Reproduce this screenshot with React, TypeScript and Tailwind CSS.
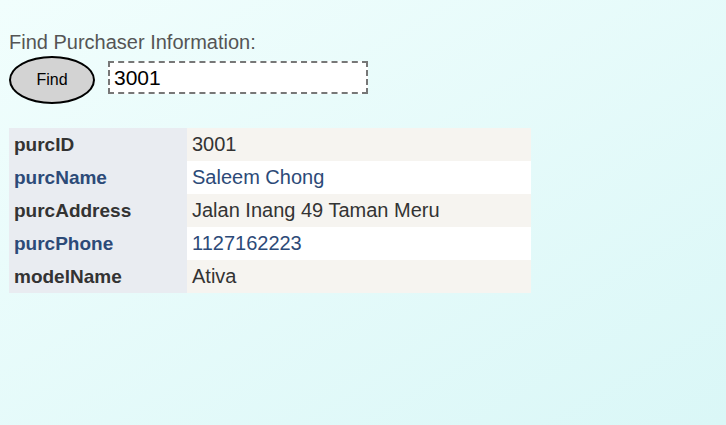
import React, { useState } from 'react'

const rows: [string, string][] = [
  ['purcID', '3001'],
  ['purcName', 'Saleem Chong'],
  ['purcAddress', 'Jalan Inang 49 Taman Meru'],
  ['purcPhone', '1127162223'],
  ['modelName', 'Ativa'],
]

export default function App() {
  const [query, setQuery] = useState('3001')

  return (
    <div className="min-h-[425px] w-full bg-gradient-to-br from-[#f1fefd] to-[#daf7f7] px-[9px] pt-[31px] font-['Liberation_Sans',Arial,sans-serif]">
      <div className="text-[20px] leading-[23px] text-[#555]">Find Purchaser Information:</div>
      <div className="flex items-start gap-[13px] mt-[2px]">
        <button className="w-[86px] h-[48px] rounded-[50%] bg-[#d3d3d3] border-2 border-black text-[16px] text-black">
          Find
        </button>
        <input
          value={query}
          onChange={(e) => setQuery(e.target.value)}
          className="mt-[5px] w-[260px] h-[33px] bg-white border-2 border-dashed border-[#777] px-[4px] text-[21px] text-black outline-none"
        />
      </div>

      {/* Result table */}
      <table className="mt-[24px] w-[522px] border-collapse">
        <tbody>
          {rows.map(([key, val], i) => (
            <tr key={key} className={i % 2 === 0 ? 'bg-[#f6f4f0] text-[#333]' : 'bg-white text-[#2c4a78]'}>
              <th className="w-[178px] h-[33px] p-0 pl-[5px] bg-[#e9ecf1] text-left align-middle text-[19px] leading-[33px] font-bold">
                {key}
              </th>
              <td className="h-[33px] p-0 pl-[5px] align-middle text-[20px] leading-[33px]">{val}</td>
            </tr>
          ))}
        </tbody>
      </table>
    </div>
  )
}
